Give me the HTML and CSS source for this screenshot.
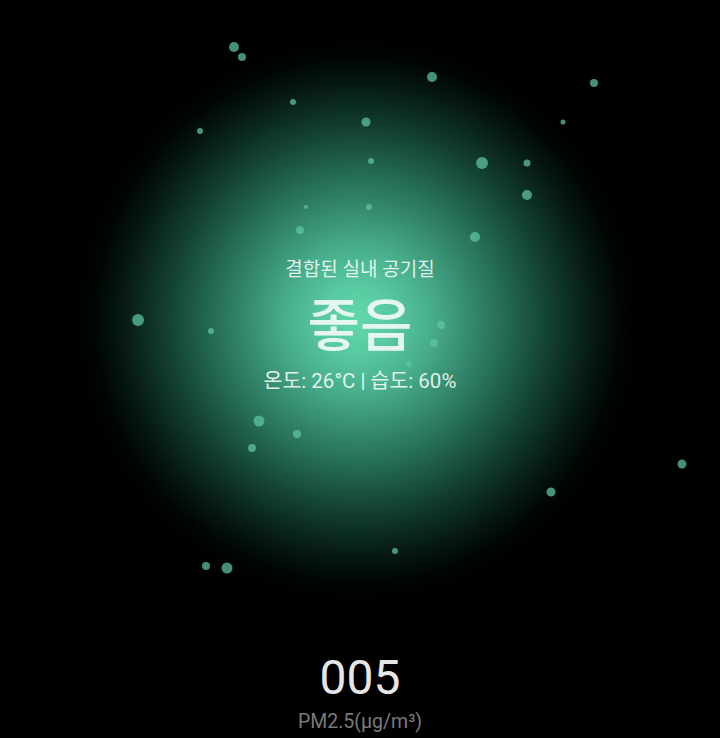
FILE: index.html
```html
<!DOCTYPE html>
<html lang="ko">
<head>
<meta charset="utf-8">
<title>실내 공기질</title>
<link rel="stylesheet" href="styles.css">
</head>
<body>
<main class="screen">
  <section class="hero">
    <div class="particles">
      <span class="dot" style="left:234px;top:47px;width:10px;height:10px"></span>
      <span class="dot" style="left:242px;top:57px;width:8px;height:8px"></span>
      <span class="dot" style="left:432px;top:77px;width:10px;height:10px"></span>
      <span class="dot" style="left:594px;top:83px;width:8px;height:8px"></span>
      <span class="dot" style="left:293px;top:102px;width:6px;height:6px"></span>
      <span class="dot" style="left:200px;top:131px;width:6px;height:6px"></span>
      <span class="dot" style="left:366px;top:122px;width:9px;height:9px"></span>
      <span class="dot" style="left:563px;top:122px;width:5px;height:5px"></span>
      <span class="dot" style="left:371px;top:161px;width:6px;height:6px"></span>
      <span class="dot" style="left:482px;top:163px;width:12px;height:12px"></span>
      <span class="dot" style="left:527px;top:163px;width:7px;height:7px"></span>
      <span class="dot" style="left:527px;top:195px;width:10px;height:10px"></span>
      <span class="dot" style="left:306px;top:207px;width:4px;height:4px"></span>
      <span class="dot" style="left:369px;top:207px;width:6px;height:6px"></span>
      <span class="dot" style="left:300px;top:230px;width:8px;height:8px"></span>
      <span class="dot" style="left:475px;top:237px;width:10px;height:10px"></span>
      <span class="dot" style="left:138px;top:320px;width:12px;height:12px"></span>
      <span class="dot" style="left:211px;top:331px;width:6px;height:6px"></span>
      <span class="dot" style="left:441px;top:325px;width:8px;height:8px"></span>
      <span class="dot" style="left:434px;top:343px;width:8px;height:8px"></span>
      <span class="dot" style="left:409px;top:364px;width:6px;height:6px"></span>
      <span class="dot" style="left:259px;top:421px;width:11px;height:11px"></span>
      <span class="dot" style="left:297px;top:434px;width:8px;height:8px"></span>
      <span class="dot" style="left:252px;top:448px;width:8px;height:8px"></span>
      <span class="dot" style="left:682px;top:464px;width:9px;height:9px"></span>
      <span class="dot" style="left:551px;top:492px;width:9px;height:9px"></span>
      <span class="dot" style="left:395px;top:551px;width:6px;height:6px"></span>
      <span class="dot" style="left:206px;top:566px;width:8px;height:8px"></span>
      <span class="dot" style="left:227px;top:568px;width:11px;height:11px"></span>
    </div>
    <div class="summary">
      <p class="label">결합된 실내 공기질</p>
      <p class="status">좋음</p>
      <p class="climate">온도: 26°C | 습도: 60%</p>
    </div>
  </section>
  <section class="reading">
    <p class="value">005</p>
    <p class="unit">PM2.5(μg/m³)</p>
  </section>
</main>
</body>
</html>
```
FILE: styles.css
```css
* { box-sizing: border-box; }
html, body {
  margin: 0;
  padding: 0;
  background: #000;
}
body {
  font-family: Roboto, "Noto Sans CJK KR", sans-serif;
  color: #fff;
  width: 720px;
  height: 738px;
  overflow: hidden;
}
.screen {
  width: 720px;
  height: 738px;
  display: flex;
  flex-direction: column;
  background: radial-gradient(circle at 358px 320px,
    #62d8ad 0px,
    #58c9a0 35px,
    #47ac8a 75px,
    #358a6d 112px,
    #236851 150px,
    #154636 185px,
    #0c2b21 215px,
    #051610 240px,
    #010605 262px,
    #000 282px);
}
.hero {
  position: relative;
  height: 640px;
  flex: none;
  display: flex;
  align-items: center;
  justify-content: center;
}
.particles {
  position: absolute;
  inset: 0;
}
.dot {
  position: absolute;
  border-radius: 50%;
  background: rgba(95, 200, 160, 0.72);
  transform: translate(-50%, -50%);
}
.summary {
  display: flex;
  flex-direction: column;
  align-items: center;
  margin-top: 12px;
  position: relative;
}
.summary p { margin: 0; }
.label {
  font-size: 19px;
  line-height: 26px;
  color: rgba(255, 255, 255, 0.85);
}
.summary .status {
  font-size: 57px;
  line-height: 60px;
  margin-top: 14px;
  color: rgba(240, 250, 245, 0.92);
  font-weight: 500;
}
.summary .climate {
  font-size: 20.5px;
  line-height: 28px;
  margin-top: 10px;
  color: rgba(255, 255, 255, 0.86);
}
.reading {
  display: flex;
  flex-direction: column;
  align-items: center;
  margin-top: 10px;
}
.reading p { margin: 0; }
.value {
  font-size: 48px;
  line-height: 56px;
  color: #e6e6e6;
  font-weight: 400;
}
.reading .unit {
  font-size: 19.5px;
  line-height: 24px;
  margin-top: 4px;
  color: #7a7a7a;
}
```
